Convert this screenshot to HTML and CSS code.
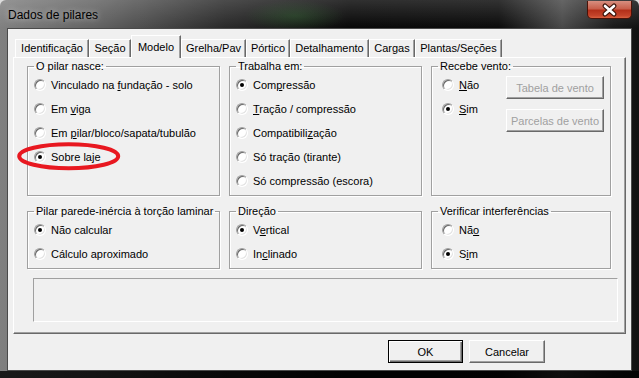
FILE: index.html
```html
<!DOCTYPE html>
<html lang="pt">
<head>
    <meta charset="UTF-8">
    <title>Dados de pilares</title>
    <link rel="stylesheet" href="styles.css">
</head>
<body>

    <div class="window">
        <div class="titlebar">
            <span class="title">Dados de pilares</span>
            <div class="close">
                <svg width="45" height="18" viewBox="0 0 45 18">
                    <path d="M18 5 L27 13 M27 5 L18 13" stroke="#3b1309" stroke-width="5" stroke-linecap="round"/>
                    <path d="M18 5 L27 13 M27 5 L18 13" stroke="#ffffff" stroke-width="2.6" stroke-linecap="round"/>
                </svg>
            </div>
        </div>

        <div class="client">
            <div class="tabs">
                <div class="tab">Identificação</div>
                <div class="tab">Seção</div>
                <div class="tab active">Modelo</div>
                <div class="tab">Grelha/Pav</div>
                <div class="tab">Pórtico</div>
                <div class="tab">Detalhamento</div>
                <div class="tab">Cargas</div>
                <div class="tab">Plantas/Seções</div>
            </div>

            <div class="panel">
                <div class="groups">
                    <fieldset class="group">
                        <legend>O pilar nasce:</legend>
                        <label class="opt"><span class="radio"></span><span>Vinculado na <u>f</u>undação - solo</span></label>
                        <label class="opt"><span class="radio"></span><span>Em <u>v</u>iga</span></label>
                        <label class="opt"><span class="radio"></span><span>Em <u>p</u>ilar/bloco/sapata/tubulão</span></label>
                        <label class="opt"><span class="radio on"></span><span>Sobre laje</span></label>
                    </fieldset>

                    <fieldset class="group">
                        <legend>Trabalha em:</legend>
                        <label class="opt"><span class="radio on"></span><span>Com<u>p</u>ressão</span></label>
                        <label class="opt"><span class="radio"></span><span><u>T</u>ração / compressão</span></label>
                        <label class="opt"><span class="radio"></span><span>Compatibili<u>z</u>ação</span></label>
                        <label class="opt"><span class="radio"></span><span>Só tração (tirante)</span></label>
                        <label class="opt"><span class="radio"></span><span>Só compressão (escora)</span></label>
                    </fieldset>

                    <fieldset class="group wide-pad">
                        <legend>Recebe vento:</legend>
                        <div class="vento">
                            <div class="vento-opts">
                                <label class="opt"><span class="radio"></span><span><u>N</u>ão</span></label>
                                <label class="opt"><span class="radio on"></span><span><u>S</u>im</span></label>
                            </div>
                            <div class="vento-btns">
                                <button class="btn" disabled>Tabela de vento</button>
                                <button class="btn" disabled>Parcelas de vento</button>
                            </div>
                        </div>
                    </fieldset>

                    <fieldset class="group">
                        <legend>Pilar parede-inércia à torção laminar</legend>
                        <label class="opt"><span class="radio on"></span><span>Não calcular</span></label>
                        <label class="opt"><span class="radio"></span><span>Cálculo aproximado</span></label>
                    </fieldset>

                    <fieldset class="group">
                        <legend>Direção</legend>
                        <label class="opt"><span class="radio on"></span><span>V<u>e</u>rtical</span></label>
                        <label class="opt"><span class="radio"></span><span>In<u>c</u>linado</span></label>
                    </fieldset>

                    <fieldset class="group wide-pad">
                        <legend>Verificar interferências</legend>
                        <label class="opt"><span class="radio"></span><span>Nã<u>o</u></span></label>
                        <label class="opt"><span class="radio on"></span><span>S<u>i</u>m</span></label>
                    </fieldset>
                </div>

                <div class="msgbox"></div>
            </div>

            <div class="actions">
                <button class="btn ok">OK</button>
                <button class="btn cancel">Cancelar</button>
            </div>
        </div>

        <!-- marcação em vermelho -->
        <svg class="mark" width="108" height="33" viewBox="0 0 108 33">
            <ellipse cx="53.7" cy="16.3" rx="49.5" ry="12" fill="none" stroke="#e81820" stroke-width="4"/>
        </svg>
    </div>

</body>
</html>
```

FILE: styles.css
```css
body {
    margin: 0;
    background: #dcdcdc;
    font-family: "Liberation Sans", Arial, sans-serif;
    font-size: 11px;
    color: #000;
}

/* Janela com moldura escura (vidro) */
.window {
    position: relative;
    width: 639px;
    height: 378px;
    box-sizing: border-box;
    padding: 0 7px 7px;
    border-radius: 6px 6px 0 0;
    display: flex;
    flex-direction: column;
    background:
        linear-gradient(to top, rgba(0, 0, 0, 0.8) 0, rgba(0, 0, 0, 0.8) 7px, rgba(0, 0, 0, 0) 7px),
        linear-gradient(to bottom, rgba(255, 255, 255, 0.16), rgba(255, 255, 255, 0) 28px),
        radial-gradient(ellipse 50px 16px at 295px 16px, rgba(40, 110, 40, 0.35), rgba(40, 110, 40, 0)),
        linear-gradient(to right, #808080 0%, #626262 15%, #2a2a2a 35%, #080808 55%, #0b0b0b 78%, #484848 88%, #1a1a1a 96%, #111 100%);
}

.titlebar {
    height: 28px;
    display: flex;
    justify-content: space-between;
    align-items: flex-start;
}

.title {
    margin: 8px 0 0 1px;
    font-size: 12px;
    line-height: 14px;
    text-shadow: 0 0 6px rgba(255, 255, 255, 0.6);
}

.close {
    width: 45px;
    height: 18px;
    margin-top: 1px;
    box-sizing: border-box;
    border: 1px solid #4a1208;
    border-top: none;
    border-radius: 0 0 5px 5px;
    background: linear-gradient(to bottom, #d88f80 0%, #c8604c 45%, #b3301a 55%, #c4432a 85%, #d9603f 100%);
    overflow: hidden;
}

.close svg {
    display: block;
    margin-left: -1px;
}

.client {
    height: 343px;
    box-sizing: border-box;
    border: 1px solid #4a4a4a;
    background: #f0f0f0;
    padding: 6px 5px 0;
}

/* Abas */
.tabs {
    display: flex;
    align-items: flex-end;
    height: 22px;
    padding-left: 2px;
}

.tab {
    box-sizing: border-box;
    height: 18px;
    padding-top: 2px;
    line-height: 13px;
    text-align: center;
    border-top: 1px solid #fff;
    border-left: 1px solid #fff;
    border-right: 1px solid #696969;
    box-shadow: inset -1px 0 0 #a0a0a0;
}

.tab:nth-child(1) { width: 74px; }
.tab:nth-child(2) { width: 42px; }
.tab:nth-child(3) { width: 50px; }
.tab:nth-child(4) { width: 65px; }
.tab:nth-child(5) { width: 44px; }
.tab:nth-child(6) { width: 79px; }
.tab:nth-child(7) { width: 46px; }
.tab:nth-child(8) { width: 87px; }

.tab.active {
    height: 23px;
    margin-bottom: -1px;
    padding-top: 5px;
    position: relative;
    z-index: 1;
    background: #f0f0f0;
}

.panel {
    height: 277px;
    box-sizing: border-box;
    border: 1px solid;
    border-color: #fff #696969 #696969 #fff;
    box-shadow: inset -1px -1px 0 #a0a0a0;
    padding: 2px 0 0 13px;
}

.groups {
    display: grid;
    grid-template-columns: 193px 193px 180px;
    grid-template-rows: 136px 64px;
    gap: 9px;
}

/* Caixas de grupo */
.group {
    margin: 0;
    padding: 0;
    min-width: 0;
    border: 1px solid #a0a0a0;
    box-shadow: inset 1px 1px 0 #fff, 1px 1px 0 #fff;
}

.group legend {
    margin-left: 6px;
    padding: 0 2px;
    line-height: 13px;
}

.opt {
    display: flex;
    align-items: center;
    gap: 5px;
    height: 24px;
    padding-left: 6px;
    white-space: nowrap;
}

.wide-pad .opt {
    padding-left: 10px;
}

.radio {
    flex: none;
    width: 12px;
    height: 12px;
    box-sizing: border-box;
    border-radius: 50%;
    background: #fff;
    border: 1px solid;
    border-color: #a0a0a0 #fff #fff #a0a0a0;
    box-shadow: inset 1px 1px 0 #696969, inset -1px -1px 0 #e3e3e3;
    display: flex;
    align-items: center;
    justify-content: center;
}

.radio.on::after {
    content: "";
    width: 4px;
    height: 4px;
    border-radius: 50%;
    background: #000;
}

.vento {
    display: flex;
}

.vento-opts {
    width: 74px;
}

.vento-btns {
    display: flex;
    flex-direction: column;
    gap: 10px;
    padding-top: 3px;
}

/* Botões clássicos */
.btn {
    width: 98px;
    height: 23px;
    padding: 0;
    font: inherit;
    color: #000;
    background: #f0f0f0;
    border: 1px solid;
    border-color: #fff #696969 #696969 #fff;
    box-shadow: inset -1px -1px 0 #a0a0a0;
}

.btn:disabled {
    color: #a0a0a0;
}

.btn.ok {
    width: 75px;
    border-color: #000;
    box-shadow: inset 1px 1px 0 #fff, inset -1px -1px 0 #696969, inset -2px -2px 0 #a0a0a0;
}

.btn.cancel {
    width: 76px;
}

.msgbox {
    margin: 9px 0 0 6px;
    width: 585px;
    height: 44px;
    box-sizing: border-box;
    border: 1px solid;
    border-color: #a0a0a0 #fff #fff #a0a0a0;
}

.actions {
    display: flex;
    justify-content: flex-end;
    gap: 6px;
    margin-top: 6px;
    padding-right: 81px;
}

.mark {
    position: absolute;
    left: 15px;
    top: 140px;
    pointer-events: none;
}
```
